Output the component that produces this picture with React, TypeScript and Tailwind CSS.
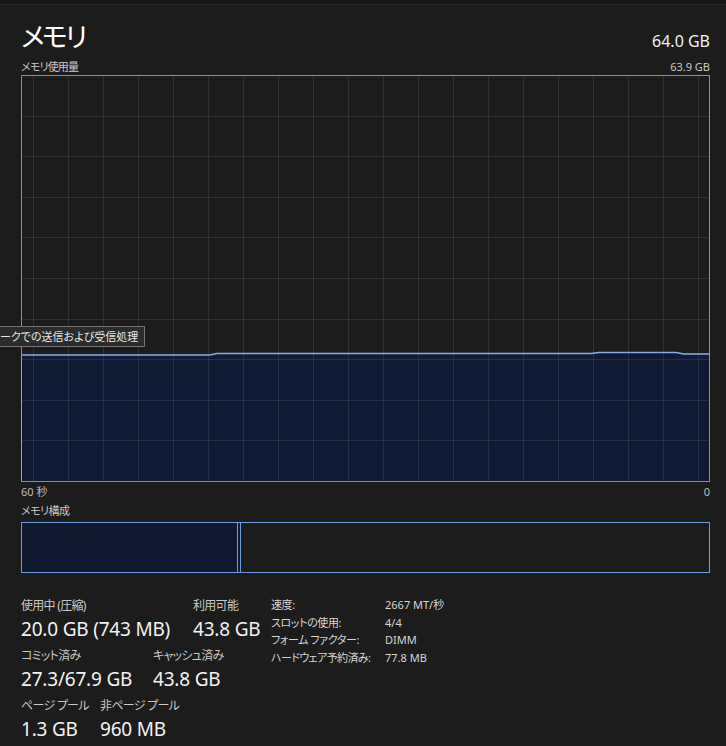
import React from "react";

const FONT: React.CSSProperties = {
  fontFamily: '"Noto Sans", "Noto Sans CJK JP", sans-serif',
  fontFeatureSettings: '"palt"',
};

function Graph() {
  const W = 689;
  const H = 407;
  const vx: number[] = [];
  for (let x = 12; x < W - 1; x += 35) vx.push(x + 0.5);
  const hy: number[] = [];
  for (let k = 1; k < 10; k++) hy.push(Math.round((H - 1) * (k / 10)) + 0.5);
  const area =
    "M0.5 280 L189 280 L196 278.5 L570 278.5 L578 277.5 L655 277.5 L663 279 L688.5 279 L688.5 406.5 L0.5 406.5 Z";
  const line =
    "M0.5 280 L189 280 L196 278.5 L570 278.5 L578 277.5 L655 277.5 L663 279 L688.5 279";
  return (
    <svg width={W} height={H} className="block">
      <rect x="0" y="0" width={W} height={H} fill="#1c1c1c" />
      <path d={area} fill="#0f1b33" />
      <rect x="1" y="281" width={W - 2} height="6" fill="#14183a" opacity="0.5" />
      {vx.map((x) => (
        <line key={"v" + x} x1={x} y1={0} x2={x} y2={H} stroke="#ffffff" strokeOpacity="0.09" strokeWidth="1" />
      ))}
      {hy.map((y) => (
        <line key={"h" + y} x1={0} y1={y} x2={W} y2={y} stroke="#ffffff" strokeOpacity="0.09" strokeWidth="1" />
      ))}
      <path d={line} fill="none" stroke="#86aee6" strokeWidth="1.4" />
      <rect x="0.5" y="0.5" width={W - 1} height={H - 1} fill="none" stroke="#8e8e8e" strokeWidth="1" />
      <line x1="0.5" y1="280" x2="0.5" y2="406" stroke="#8aa6cc" strokeWidth="1" />
    </svg>
  );
}

function Stat({ label, value, w }: { label: string; value: string; w: string }) {
  return (
    <div className={"flex flex-col " + w}>
      <div className="text-[12px] leading-[16px] text-[#c9c9c9] whitespace-nowrap tracking-[-0.7px]">{label}</div>
      <div className="mt-[3px] text-[19px] leading-[24px] text-[#f2f2f2] whitespace-nowrap tracking-[-0.2px]">{value}</div>
    </div>
  );
}

export default function App() {
  return (
    <div className="relative w-[726px] h-[746px] overflow-hidden bg-[#1c1c1c] text-white" style={FONT}>
      <div className="h-[5px] bg-[#161616] border-b border-[#2c2c2c]" />
      <div className="pl-[21px] pr-[16px]">
        {/* title */}
        <div className="flex justify-between items-start pt-[15px] h-[53px]">
          <div className="text-[27px] leading-[34px] text-white tracking-[-2.5px]">メモリ</div>
          <div className="mt-[11px] text-[16px] leading-[20px] text-[#f2f2f2]">64.0 GB</div>
        </div>
        <div className="flex justify-between items-center h-[17px] text-[11px] leading-[16px] text-[#c9c9c9]">
          <span className="tracking-[-0.8px]">メモリ使用量</span>
          <span>63.9 GB</span>
        </div>
        <Graph />
        <div className="mt-[3px] flex justify-between h-[14px] text-[11px] leading-[14px] text-[#bdbdbd]">
          <span>60 秒</span>
          <span>0</span>
        </div>
        <div className="mt-[4px] h-[16px] text-[11px] leading-[16px] text-[#c9c9c9] tracking-[-0.5px]">メモリ構成</div>
        <div className="mt-[3px] flex h-[51px] w-[689px] border border-[#6f9be0]">
          <div className="w-[216px] bg-[#0f1a30] border-r border-[#6f9be0]" />
          <div className="w-[3px] bg-[#101a2c] border-r border-[#6f9be0]" />
          <div className="flex-1" />
        </div>

        {/* stats */}
        <div className="flex items-start mt-[25px]">
          <div className="w-[250px] flex flex-col gap-[7px]">
            <div className="flex">
              <Stat w="w-[172px]" label="使用中 (圧縮)" value="20.0 GB (743 MB)" />
              <Stat w="" label="利用可能" value="43.8 GB" />
            </div>
            <div className="flex">
              <Stat w="w-[132px]" label="コミット済み" value="27.3/67.9 GB" />
              <Stat w="" label="キャッシュ済み" value="43.8 GB" />
            </div>
            <div className="flex">
              <Stat w="w-[79px]" label="ページ プール" value="1.3 GB" />
              <Stat w="" label="非ページ プール" value="960 MB" />
            </div>
          </div>
          <div className="mt-[-2px] grid grid-cols-[114px_auto] content-start items-start text-[11px] leading-[17.5px] text-[#d6d6d6]">
            <span className="tracking-[-0.4px]">速度:</span>
            <span>2667 MT/秒</span>
            <span className="tracking-[-0.4px]">スロットの使用:</span>
            <span>4/4</span>
            <span className="tracking-[-0.4px]">フォーム ファクター:</span>
            <span>DIMM</span>
            <span className="tracking-[-0.6px]">ハードウェア予約済み:</span>
            <span>77.8 MB</span>
          </div>
        </div>
      </div>

      {/* tooltip */}
      <div className="absolute left-0 top-[326px] h-[21px] flex items-center bg-[#2b2b2b] border border-l-0 border-[#757575] pr-[6px]">
        <span className="whitespace-nowrap text-[11px] leading-[16px] text-[#e8e8e8]">ークでの送信および受信処理</span>
      </div>
    </div>
  );
}
